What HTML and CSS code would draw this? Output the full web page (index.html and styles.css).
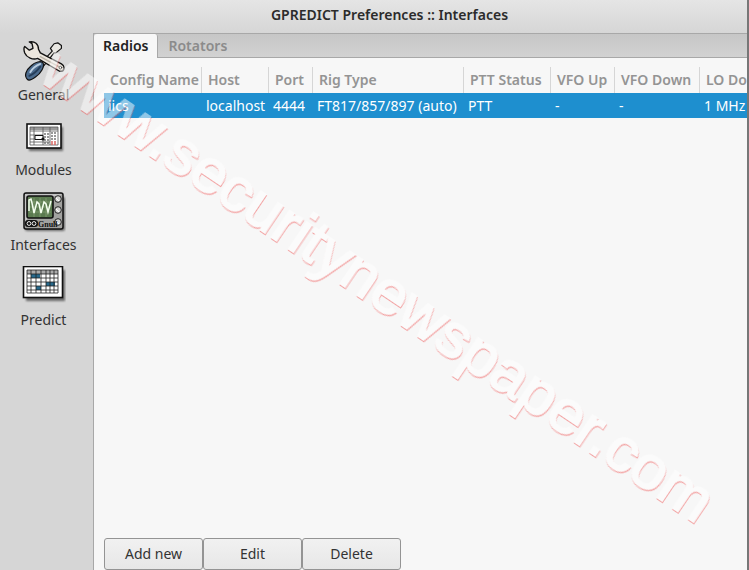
FILE: index.html
```html
<!DOCTYPE html>
<html lang="en">
<head>
<meta charset="utf-8">
<title>GPREDICT Preferences :: Interfaces</title>
<link rel="stylesheet" href="styles.css">
</head>
<body>
<div class="window">
  <header class="titlebar"><h1>GPREDICT Preferences :: Interfaces</h1></header>
  <div class="body">
    <nav class="sidebar">
      <button type="button" class="page">
        <svg width="44" height="44" viewBox="0 0 48 48" aria-hidden="true">
          <g stroke="#111" stroke-linejoin="round" stroke-linecap="round">
            <path d="M20 25L33 11L31 8L35 3L39 2L43 5L43 8L37 13L35 13L23 28Z" fill="#e8e6e1" stroke-width="1.3"/>
            <path d="M6 42C2 38 4 32 10 27C14 23 21 21 23 24C25 28 20 36 15 39C11 42 8 44 6 42Z" fill="#4c6b8d" stroke-width="1.3"/>
            <path d="M9 34C12 29 15 27 20 25" fill="none" stroke="#b9cde0" stroke-width="2"/>
            <path d="M8 38C13 36 17 32 20 28" fill="none" stroke="#263e5a" stroke-width="2"/>
            <path d="M3 6L8 10L12 8L11 3L8 1C14 0 18 3 18 9L20 13L43 25C48 28 46 34 41 33L17 19C12 21 5 18 3 13C2 10 2 7 3 6Z" fill="#ece6dd" stroke-width="1.5"/>
            <path d="M20 17L40 28" fill="none" stroke="#b9b1a6" stroke-width="1.5"/>
            <circle cx="42" cy="29" r="1.4" fill="#fff" stroke-width=".6"/>
          </g>
        </svg>
        <span>General</span>
      </button>
      <button type="button" class="page">
        <svg width="42" height="44" viewBox="0 0 42 44" aria-hidden="true">
          <rect class="shade" x="6" y="11" width="34" height="24"/>
          <rect x="4" y="8" width="34" height="24" fill="#fff" stroke="#111" stroke-width="1.6"/>
          <rect x="7" y="11" width="28" height="3" fill="#999"/>
          <path d="M7 11H35V29H7ZM11 11V29M20 11V29M27 11V29M7 15H35M7 19H20M7 23H20M7 26H27" fill="none" stroke="#555" stroke-width=".8"/>
          <path d="M21 18H26M21 21H26M21 24H26M21 27H26M28 17H34M28 20H34M28 23H34" stroke="#777" stroke-width="1.5" stroke-dasharray="2 1"/>
          <path d="M28 26H34M28 28H33" stroke="#d96763" stroke-width="1.5" stroke-dasharray="2 1"/>
          <path d="M12 19.500H20V23.500H12Z" fill="#fff" stroke="#111"/>
          <circle cx="20" cy="23" r="1.600" fill="#111"/>
        </svg>
        <span>Modules</span>
      </button>
      <button type="button" class="page">
        <svg width="44" height="44" viewBox="0 0 44 44" aria-hidden="true">
          <rect class="shade" x="3" y="6" width="40" height="34" rx="2"/>
          <rect x="2" y="2" width="39" height="36" rx="2" fill="#a2a2a0" stroke="#111" stroke-width="1.500"/>
          <path d="M3 3H40L37 5H5V29L3 31Z" fill="#c4c4c4"/>
          <rect x="5" y="5" width="26" height="22" rx="2" fill="#5b7b50" stroke="#111" stroke-width="1.600"/>
          <path d="M7 11H29M7 16H29M7 21H29M12 7V26M18 7V26M24 7V26" stroke="#86a276" stroke-width=".7"/>
          <path d="M7 20V9L9 8L10 12L12 22L15 11L17 13L19 22L22 11L24 13L26 21L29 10" fill="none" stroke="#f5fff0" stroke-width="1.500"/>
          <g fill="#d5d5d3" stroke="#222" stroke-width="1">
            <circle cx="36" cy="8" r="3.300"/><circle cx="36" cy="19" r="3.300"/><circle cx="36" cy="31" r="3.300"/>
          </g>
          <path d="M34 7L37 10M34 18L37 21M34 30L37 33" stroke="#fff"/>
          <rect x="3" y="29" width="13" height="7" rx="3" fill="#111"/>
          <circle cx="7" cy="32.500" r="1.900" fill="none" stroke="#eee"/><circle cx="12" cy="32.500" r="1.900" fill="none" stroke="#eee"/>
          <text class="brand" x="16" y="36">Gnull</text>
        </svg>
        <span>Interfaces</span>
      </button>
      <button type="button" class="page">
        <svg width="44" height="44" viewBox="0 0 44 44" aria-hidden="true">
          <rect class="shade" x="4" y="4" width="39" height="31"/>
          <rect x="1.500" y=".500" width="39" height="31" fill="#fff" stroke="#111" stroke-width="1.600"/>
          <rect x="5" y="4" width="31" height="4" fill="#aaa"/>
          <path d="M9 8H18V12H9ZM24 16H33V20H24ZM14 20H19V24H14Z" fill="#27698c"/>
          <path d="M5 4H36V27H5ZM5 8H36M5 12H36M5 16H36M5 20H36M5 24H36M9 4V27M14 4V27M19 4V27M24 4V27M28 4V27M32 4V27" fill="none" stroke="#222" stroke-width=".8"/>
        </svg>
        <span>Predict</span>
      </button>
    </nav>
    <main class="notebook">
      <div class="tabs" role="tablist">
        <button type="button" class="tab active" role="tab" aria-selected="true">Radios</button>
        <button type="button" class="tab" role="tab" aria-selected="false">Rotators</button>
      </div>
      <section class="panel">
        <div class="list">
          <table>
            <colgroup><col class="c-name"><col class="c-host"><col class="c-port"><col class="c-rig"><col class="c-ptt"><col class="c-up"><col class="c-down"><col class="c-lo"></colgroup>
            <thead><tr><th>Config Name</th><th>Host</th><th>Port</th><th>Rig Type</th><th>PTT Status</th><th>VFO Up</th><th>VFO Down</th><th>LO Do</th></tr></thead>
            <tbody><tr><td>iics</td><td>localhost</td><td>4444</td><td>FT817/857/897 (auto)</td><td>PTT</td><td>-</td><td>-</td><td>1 MHz</td></tr></tbody>
          </table>
        </div>
        <div class="actions">
          <button type="button">Add new</button><button type="button">Edit</button><button type="button">Delete</button>
        </div>
      </section>
    </main>
  </div>
  <svg class="watermark" viewBox="0 0 749 570" preserveAspectRatio="xMinYMin meet">
    <text transform="translate(37 79) rotate(34)">www.securitynewspaper.com</text>
  </svg>
</div>
</body>
</html>
```
FILE: styles.css
```css
* { box-sizing: border-box; }
body {
  margin: 0;
  font: 14px/20px "Noto Sans", "Open Sans", sans-serif;
  color: #333;
  background: #d6d6d6;
}
button { font: inherit; color: inherit; margin: 0; }
.window {
  position: relative;
  display: flex;
  flex-direction: column;
  height: 100vh;
  overflow: hidden;
  border-right: 2px solid #777;
}
.titlebar {
  height: 33px;
  padding: 5px 0 8px 32px;
  text-align: center;
  background: linear-gradient(#e5e5e5, #d6d6d6);
}
h1 { margin: 0; font-size: 14px; line-height: 20px; font-weight: 600; color: #2b2b2b; }
.body { display: flex; flex: 1; min-height: 0; }
.sidebar { width: 93px; padding: 1px 6px 0 0; flex: none; }
.page {
  display: flex;
  flex-direction: column;
  align-items: center;
  justify-content: flex-end;
  width: 100%;
  height: 75px;
  padding: 0 0 4px;
  border: 0;
  background: none;
}
.page svg { display: block; }
.shade { fill: #000; opacity: .5; filter: blur(1px); }
.brand { font: bold 8px "Liberation Serif", serif; fill: #111; }
.notebook {
  display: flex;
  flex-direction: column;
  flex: 1;
  min-width: 0;
  border: solid #a8a8a8;
  border-width: 1px 0 0 1px;
}
.tabs {
  display: flex;
  height: 24px;
  background: linear-gradient(#c6c6c6, #d2d2d2);
  box-shadow: inset 0 -1px #a8a8a8;
}
.tab {
  padding: 0 10px;
  border: 0;
  background: none;
  font-weight: 600;
  color: #8b8b8b;
}
.tab.active {
  padding: 0 9px;
  color: #222;
  background: #f7f7f7;
  border-right: 1px solid #a8a8a8;
  border-radius: 3px 3px 0 0;
}
.panel {
  display: flex;
  flex-direction: column;
  flex: 1;
  min-height: 0;
  padding: 9px 0 0 10px;
  background: #f7f7f7;
}
.list { flex: 1; overflow: hidden; }
table { width: 100%; table-layout: fixed; border-collapse: separate; border-spacing: 0; }
th, td { text-align: left; white-space: nowrap; padding: 0 0 0 6px; }
th { height: 26px; font-weight: 600; color: #949494; border-right: 1px solid #d6d6d6; }
th:last-child { border-right: 0; }
td { height: 25px; padding-left: 4px; color: #fff; background: #1e8fcf; }
.c-name { width: 98px; }
.c-host { width: 67px; }
.c-port { width: 44px; }
.c-rig { width: 151px; }
.c-ptt { width: 87px; }
.c-up { width: 64px; }
.c-down { width: 85px; }
.actions { display: flex; }
.actions button {
  width: 99px;
  height: 32px;
  padding: 0;
  border: 1px solid #949494;
  border-radius: 3px;
  background: linear-gradient(#f1f1f1, #e7e7e7);
}
.watermark {
  position: absolute;
  top: 0;
  left: 0;
  width: 749px;
  height: 570px;
  pointer-events: none;
}
.watermark text {
  font: 62px "Liberation Sans", sans-serif;
  fill: #fff;
  stroke: #fff;
  stroke-width: 2px;
  opacity: .5;
  filter: drop-shadow(1px 1px 0 #ef5555);
}
```
